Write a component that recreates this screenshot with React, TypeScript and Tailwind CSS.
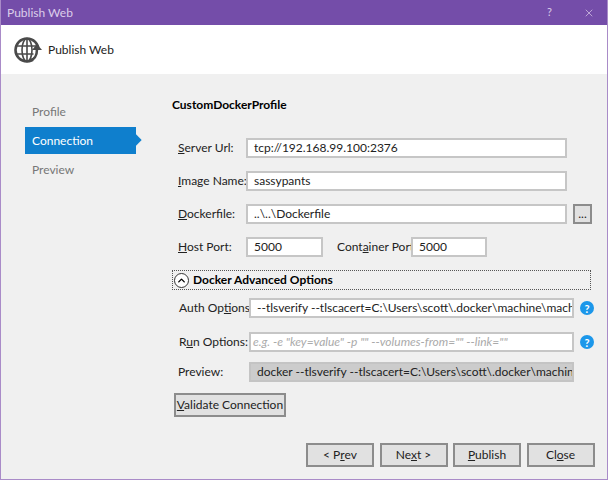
import { ReactNode } from 'react';
import { ChevronUp, X } from 'lucide-react';

const fieldClass = 'h-5 border-2 pl-1.5 text-[#222] leading-4 overflow-hidden whitespace-nowrap';
const inputClass = `${fieldClass} border-[#c6c6c6] bg-white`;

function Label({ children, className = '' }: { children: ReactNode; className?: string }) {
  return <div className={`text-[#222] whitespace-nowrap ${className}`}>{children}</div>;
}

function NavButton({ children, className = '' }: { children: ReactNode; className?: string }) {
  return (
    <div className={`flex h-6 w-[68px] items-center justify-center border-2 border-[#8c8c8c] bg-[#e1e1e1] text-[#222] ${className}`}>
      {children}
    </div>
  );
}

function HelpIcon() {
  return (
    <div className="ml-1.5 flex h-[14px] w-[14px] shrink-0 items-center justify-center rounded-full bg-[#1c97ea] text-[11px] font-bold leading-none text-white">
      ?
    </div>
  );
}

function GlobeIcon() {
  return (
    <svg width="30" height="30" viewBox="0 0 30 30" fill="none" stroke="#4a4a4a">
      <circle cx="13" cy="15" r="11.5" strokeWidth="2.6" />
      <ellipse cx="13" cy="15" rx="5" ry="11.5" strokeWidth="1.6" />
      <path d="M2 11h22M2 19h22M13 3v24" strokeWidth="1.6" />
      <path d="M23 26V12" stroke="#fff" strokeWidth="7" />
      <path d="M16 25c4 0 7-4 7-11" strokeWidth="2.6" />
      <path d="M18 15l5-6 5 6z" fill="#4a4a4a" stroke="none" />
    </svg>
  );
}

export default function App() {
  return (
    <div className="flex h-[480px] w-[608px] flex-col border-x border-b border-[#a98bc8] bg-[#f0f0f0] font-['Lato',sans-serif] text-[12px]">
      <div className="flex h-[25px] shrink-0 items-center bg-[#744da9] pl-[6px] pr-[12px] text-[#dccdea]">
        <span className="flex-1 text-[12px]">Publish Web</span>
        <span className="mr-[31px] text-[11px]">?</span>
        <X size={12} strokeWidth={1.4} />
      </div>

      <div className="flex h-[49px] shrink-0 items-center gap-[4px] bg-white pl-[13px] text-[#222]">
        <GlobeIcon />
        <span>Publish Web</span>
      </div>

      <div className="flex flex-1">
        <div className="w-[171px] shrink-0 pl-[24px] pt-[24px] text-[#777]">
          <div className="flex h-[27px] items-center pl-[7px]">Profile</div>
          <div className="relative mt-[2px] flex h-[27px] w-[111px] items-center bg-[#0f7fcd] pl-[7px] text-white">
            Connection
            <div className="absolute -right-[4px] top-[9px] h-[8px] w-[8px] rotate-45 bg-[#0f7fcd]" />
          </div>
          <div className="mt-[2px] flex h-[27px] items-center pl-[7px]">Preview</div>
        </div>

        <div className="flex-1 pr-[16px]">
          <div className="mt-[23px] font-bold leading-[16px] text-black">CustomDockerProfile</div>

          <div className="mt-[25px] flex items-center">
            <Label className="w-[74px] pl-[6px]"><u>S</u>erver Url:</Label>
            <div className={`${inputClass} w-[321px]`}>tcp://192.168.99.100:2376</div>
          </div>
          <div className="mt-[13px] flex items-center">
            <Label className="w-[74px] pl-[6px]"><u>I</u>mage Name:</Label>
            <div className={`${inputClass} w-[321px]`}>sassypants</div>
          </div>
          <div className="mt-[13px] flex items-center">
            <Label className="w-[74px] pl-[6px]"><u>D</u>ockerfile:</Label>
            <div className={`${inputClass} w-[321px]`}>..\..\Dockerfile</div>
            <div className="ml-[6px] flex h-[20px] w-[19px] items-center justify-center border-2 border-[#8c8c8c] bg-[#e1e1e1] leading-none text-[#222]">...</div>
          </div>
          <div className="mt-[13px] flex items-center">
            <Label className="w-[74px] pl-[6px]"><u>H</u>ost Port:</Label>
            <div className={`${inputClass} w-[77px]`}>5000</div>
            <Label className="ml-[14px] w-[74px]">Cont<u>a</u>iner Port:</Label>
            <div className={`${inputClass} w-[76px]`}>5000</div>
          </div>

          <div className="mt-[13px] flex h-[20px] w-[419px] items-center gap-[4px] border border-dotted border-[#555] pl-[1px] font-bold text-black">
            <div className="flex h-[15px] w-[15px] items-center justify-center rounded-full border border-[#333] bg-white">
              <ChevronUp size={11} strokeWidth={3} />
            </div>
            Docker Advanced Options
          </div>

          <div className="mt-[8px] flex items-center">
            <Label className="w-[77px] pl-[7px]">Auth Op<u>t</u>ions:</Label>
            <div className={`${inputClass} w-[325px]`}>--tlsverify --tlscacert=C:\Users\scott\.docker\machine\machines\defau</div>
            <HelpIcon />
          </div>
          <div className="mt-[14px] flex items-center">
            <Label className="w-[77px] pl-[7px]">R<u>u</u>n Options:</Label>
            <div className={`${inputClass} w-[325px] pl-[2px] italic text-[#aaa]`}>e.g. -e "key=value" -p "" --volumes-from="" --link=""</div>
            <HelpIcon />
          </div>
          <div className="mt-[10px] flex items-center">
            <Label className="w-[77px] pl-[6px]">Preview:</Label>
            <div className={`${fieldClass} w-[325px] border-[#c4c4c4] bg-[#cccccc]`}>docker --tlsverify --tlscacert=C:\Users\scott\.docker\machine\machine</div>
          </div>

          <div className="mt-[11px] ml-[2px] flex h-[24px] w-[112px] items-center justify-center border-2 border-[#8c8c8c] bg-[#e1e1e1] text-[#222]">
            <span><u>V</u>alidate Connection</span>
          </div>

          <div className="mt-[26px] flex gap-[5.5px] pl-[134px]">
            <NavButton>&lt; P<u>r</u>ev</NavButton>
            <NavButton>Ne<u>x</u>t &gt;</NavButton>
            <NavButton><u>P</u>ublish</NavButton>
            <NavButton>Cl<u>o</u>se</NavButton>
          </div>
        </div>
      </div>
    </div>
  );
}
